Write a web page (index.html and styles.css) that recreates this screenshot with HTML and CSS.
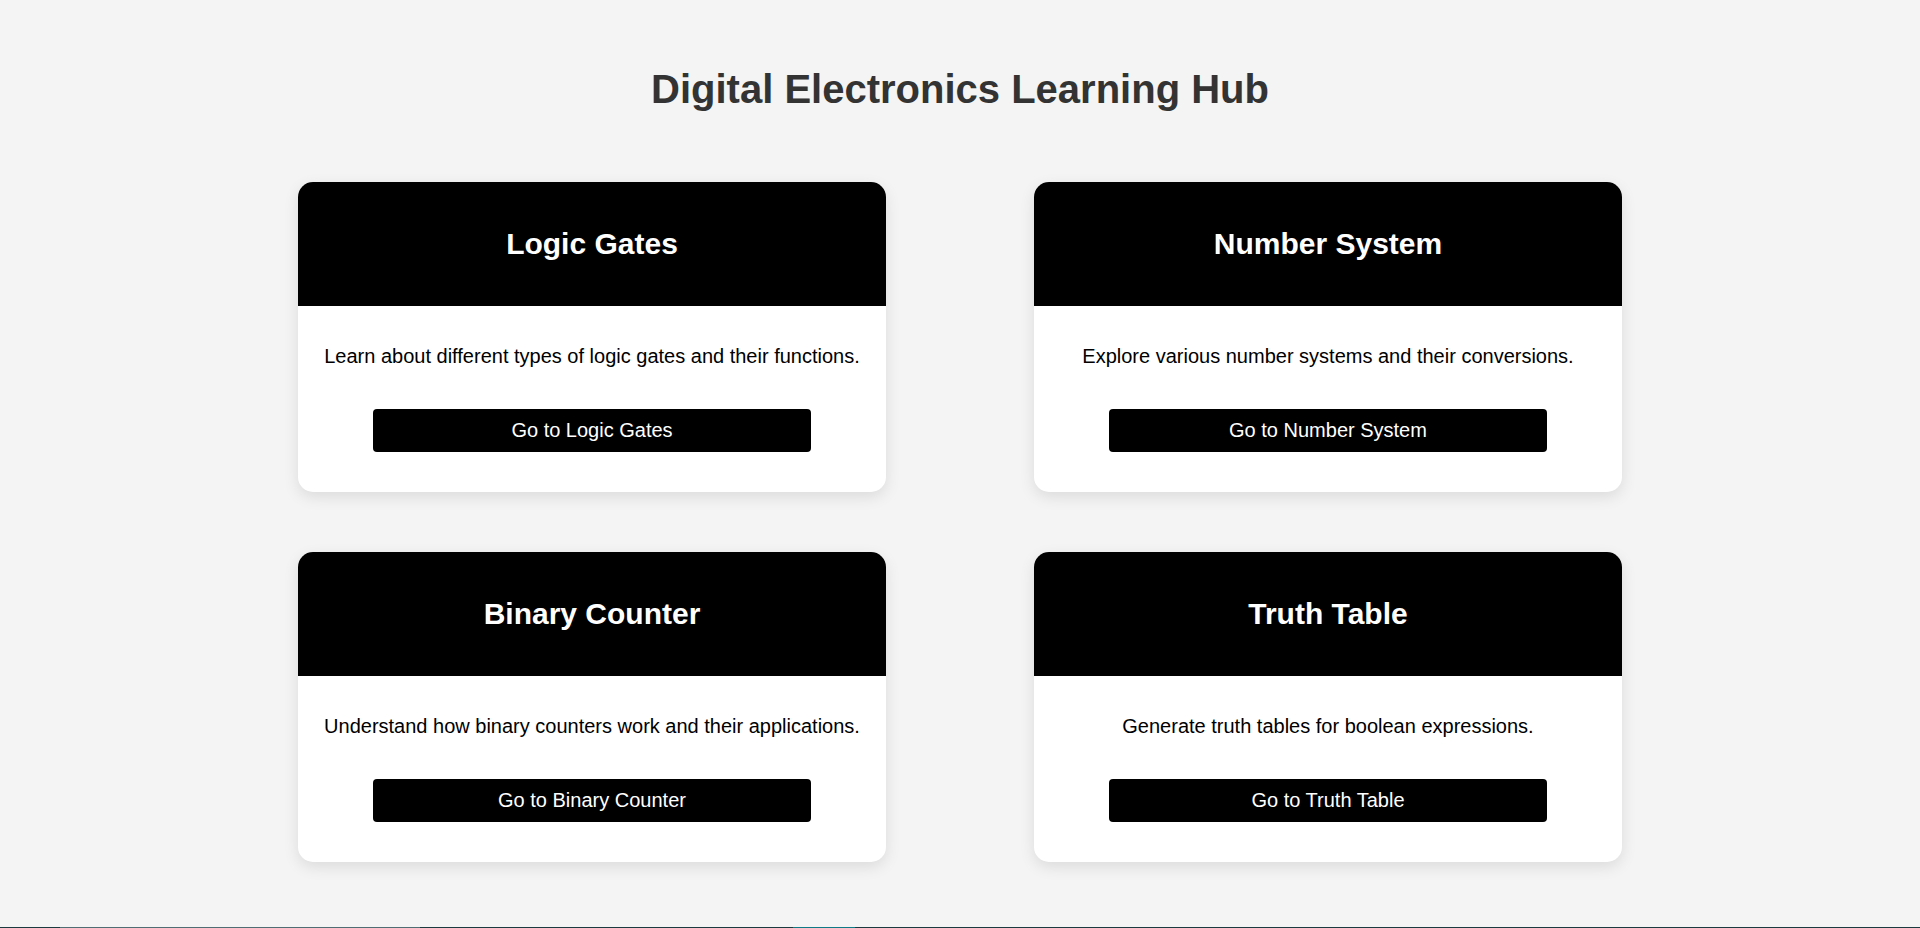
FILE: index.html
```html
<!DOCTYPE html>
<html lang="en">
<head>
<meta charset="UTF-8">
<title>Digital Electronics Learning Hub</title>
<link rel="stylesheet" href="styles.css">
</head>
<body>
<main class="page">
  <h1 class="title">Digital Electronics Learning Hub</h1>
  <section class="grid">
    <div class="card">
      <div class="card-head"><h2>Logic Gates</h2></div>
      <div class="card-body">
        <p>Learn about different types of logic gates and their functions.</p>
        <a class="btn" href="#">Go to Logic Gates</a>
      </div>
    </div>
    <div class="card">
      <div class="card-head"><h2>Number System</h2></div>
      <div class="card-body">
        <p>Explore various number systems and their conversions.</p>
        <a class="btn" href="#">Go to Number System</a>
      </div>
    </div>
    <div class="card">
      <div class="card-head"><h2>Binary Counter</h2></div>
      <div class="card-body">
        <p>Understand how binary counters work and their applications.</p>
        <a class="btn" href="#">Go to Binary Counter</a>
      </div>
    </div>
    <div class="card">
      <div class="card-head"><h2>Truth Table</h2></div>
      <div class="card-body">
        <p>Generate truth tables for boolean expressions.</p>
        <a class="btn" href="#">Go to Truth Table</a>
      </div>
    </div>
  </section>
</main>
<div class="edge">
  <span class="seg seg-a"></span><span class="seg seg-b"></span><span class="seg seg-c"></span><span class="seg seg-d"></span><span class="seg seg-e"></span>
</div>
</body>
</html>
```
FILE: styles.css
```css
html, body {
  margin: 0;
  padding: 0;
}
body {
  background: #f4f4f4;
  font-family: "Liberation Sans", Arial, sans-serif;
  height: 928px;
  overflow: hidden;
  display: flex;
  flex-direction: column;
}
.page {
  flex: 1;
  display: flex;
  flex-direction: column;
  align-items: center;
}
.title {
  margin: 66px 0 0;
  font-size: 40px;
  line-height: 46px;
  font-weight: bold;
  color: #333333;
  text-align: center;
}
.grid {
  margin-top: 70px;
  display: grid;
  grid-template-columns: 588px 588px;
  column-gap: 148px;
  row-gap: 60px;
}
.card {
  background: #ffffff;
  border-radius: 15px;
  overflow: hidden;
  box-shadow: 0 5px 15px rgba(0, 0, 0, 0.1);
  display: flex;
  flex-direction: column;
}
.card-head {
  background: #000000;
  height: 124px;
  display: flex;
  align-items: center;
  justify-content: center;
}
.card-head h2 {
  margin: 0;
  color: #ffffff;
  font-size: 30px;
  line-height: 34px;
  font-weight: bold;
}
.card-body {
  padding: 39px 20px 40px;
  display: flex;
  flex-direction: column;
  align-items: center;
}
.card-body p {
  margin: 0 0 41px;
  font-size: 20px;
  line-height: 23px;
  color: #000000;
  text-align: center;
}
.btn {
  display: block;
  width: 80%;
  box-sizing: border-box;
  background: #000000;
  color: #ffffff;
  text-decoration: none;
  text-align: center;
  font-size: 20px;
  line-height: 23px;
  padding: 10px 0;
  border-radius: 4px;
}
.edge {
  height: 1px;
  display: flex;
  background: #1b3a40;
}
.seg { display: block; height: 1px; }
.seg-a { width: 60px; background: #1b3a40; }
.seg-b { width: 360px; background: #4f6d72; }
.seg-c { width: 373px; background: #1b3a40; }
.seg-d { width: 62px; background: #0e7a85; }
.seg-e { flex: 1; background: #1b3a40; }
```
